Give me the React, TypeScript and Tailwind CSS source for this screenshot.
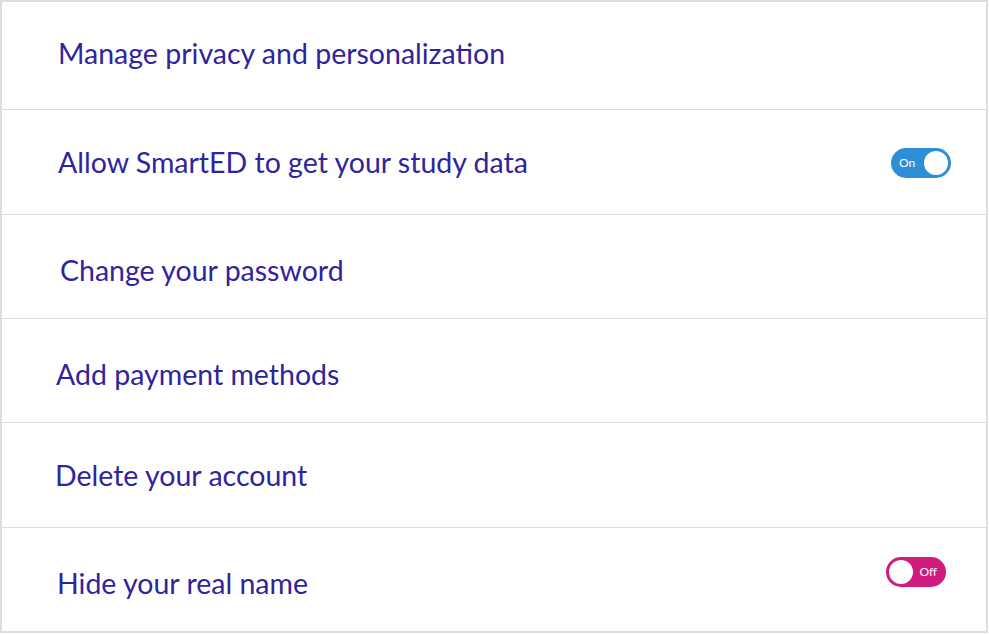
import React from "react";

type Row = {
  label: string;
  h: string;
  pl: string;
  pt: string;
  toggle?: "on" | "off";
};

const rows: Row[] = [
  { label: "Manage privacy and personalization", h: "h-[108px]", pl: "pl-[56px]", pt: "pb-[4px]" },
  { label: "Allow SmartED to get your study data", h: "h-[105px]", pl: "pl-[56px]", pt: "pt-0", toggle: "on" },
  { label: "Change your password", h: "h-[104px]", pl: "pl-[58px]", pt: "pt-[8px]" },
  { label: "Add payment methods", h: "h-[104px]", pl: "pl-[54px]", pt: "pt-[8px]" },
  { label: "Delete your account", h: "h-[105px]", pl: "pl-[53px]", pt: "pt-0" },
  { label: "Hide your real name", h: "h-[103px]", pl: "pl-[55px]", pt: "pt-[8px]", toggle: "off" },
];

function Toggle({ on }: { on: boolean }) {
  if (on) {
    return (
      <div className="flex h-[30px] w-[60px] items-center justify-between rounded-full bg-[#2f8fd6] pl-[8px] pr-[3px]">
        <span className="text-[12px] leading-none text-white">On</span>
        <span className="h-[24px] w-[24px] rounded-full bg-white" />
      </div>
    );
  }
  return (
    <div className="flex h-[30px] w-[60px] items-center justify-between rounded-full bg-[#cf1b7d] pl-[3px] pr-[9px]">
      <span className="h-[24px] w-[24px] rounded-full bg-white" />
      <span className="text-[12px] leading-none text-white">Off</span>
    </div>
  );
}

export default function App() {
  return (
    <div className="h-[634px] w-[989px] bg-white font-['Lato',sans-serif]">
      <div className="w-[988px] border-2 border-[#dddddd]">
        {rows.map((r, i) => (
          <div
            key={r.label}
            className={`flex items-center ${r.h} ${i < rows.length - 1 ? "border-b border-[#dcdcdc]" : ""}`}
          >
            <div className={`flex-1 ${r.pl} ${r.pt} text-[28.5px] text-[#30249c]`}>{r.label}</div>
            {r.toggle === "on" && (
              <div className="pr-[35px] pt-[2px]">
                <Toggle on />
              </div>
            )}
            {r.toggle === "off" && (
              <div className="pr-[40px] mb-[15px]">
                <Toggle on={false} />
              </div>
            )}
          </div>
        ))}
      </div>
    </div>
  );
}
